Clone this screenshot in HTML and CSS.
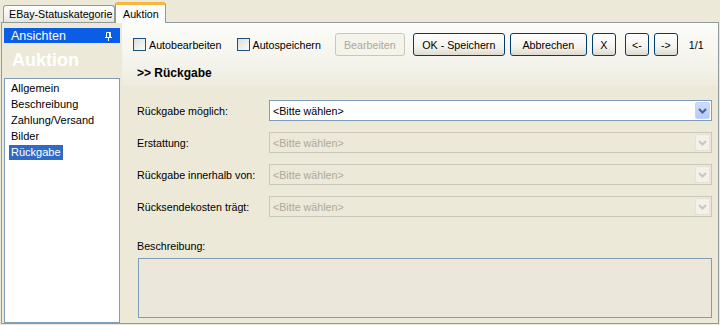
FILE: index.html
```html
<!DOCTYPE html>
<html lang="de">
<head>
  <meta charset="UTF-8" />
  <title>Auktion - Rückgabe</title>
  <link rel="stylesheet" href="styles.css">
</head>
<body>
  <!-- Tab strip -->
  <div class="tabs">
    <div class="tab">EBay-Statuskategorie</div>
    <div class="tab active">Auktion</div>
  </div>

  <div class="page">
    <!-- Left: views -->
    <aside class="sidebar">
      <div class="side-head">
        <span>Ansichten</span>
        <svg class="pin" width="7" height="9" viewBox="0 0 7 9">
          <path d="M0 5.5H7M1.5 0.5H5.5V5.5M1.5 0.5V5.5M4.5 0.5V5.5M3.5 5.5V9" stroke="#fff" fill="none" />
        </svg>
      </div>
      <div class="side-title">Auktion</div>
      <ul class="views">
        <li>Allgemein</li>
        <li>Beschreibung</li>
        <li>Zahlung/Versand</li>
        <li>Bilder</li>
        <li class="sel">Rückgabe</li>
      </ul>
    </aside>

    <!-- Right: editor -->
    <main class="content">
      <div class="top">
        <div class="toolbar">
          <label class="check"><span class="box"></span>Autobearbeiten</label>
          <label class="check second"><span class="box"></span>Autospeichern</label>
          <button class="btn edit" disabled>Bearbeiten</button>
          <button class="btn ok">OK - Speichern</button>
          <button class="btn cancel">Abbrechen</button>
          <button class="btn small close">X</button>
          <button class="btn small prev">&lt;-</button>
          <button class="btn small next">-&gt;</button>
          <span class="count">1/1</span>
        </div>
        <div class="section">&gt;&gt; Rückgabe</div>
      </div>

      <div class="form">
        <div class="row">
          <span class="label">Rückgabe möglich:</span>
          <div class="select">
            <span class="value">&lt;Bitte wählen&gt;</span>
            <span class="arrow"><svg width="9" height="6" viewBox="0 0 9 6"><path d="M1 1L4.5 4.5L8 1" stroke="#4d6185" stroke-width="2" fill="none"/></svg></span>
          </div>
        </div>
        <div class="row">
          <span class="label">Erstattung:</span>
          <div class="select off">
            <span class="value">&lt;Bitte wählen&gt;</span>
            <span class="arrow"><svg width="9" height="6" viewBox="0 0 9 6"><path d="M1 1L4.5 4.5L8 1" stroke="#c9c7ba" stroke-width="2" fill="none"/></svg></span>
          </div>
        </div>
        <div class="row">
          <span class="label">Rückgabe innerhalb von:</span>
          <div class="select off">
            <span class="value">&lt;Bitte wählen&gt;</span>
            <span class="arrow"><svg width="9" height="6" viewBox="0 0 9 6"><path d="M1 1L4.5 4.5L8 1" stroke="#c9c7ba" stroke-width="2" fill="none"/></svg></span>
          </div>
        </div>
        <div class="row">
          <span class="label">Rücksendekosten trägt:</span>
          <div class="select off">
            <span class="value">&lt;Bitte wählen&gt;</span>
            <span class="arrow"><svg width="9" height="6" viewBox="0 0 9 6"><path d="M1 1L4.5 4.5L8 1" stroke="#c9c7ba" stroke-width="2" fill="none"/></svg></span>
          </div>
        </div>

        <div class="desc-label">Beschreibung:</div>
        <div class="textarea"></div>
      </div>
    </main>
  </div>
</body>
</html>
```

FILE: styles.css
```css
/* Base */
body {
  margin: 0;
  width: 720px;
  height: 325px;
  overflow: hidden;
  background: #ece9d8;
  font-family: 'Liberation Sans', Arial, sans-serif;
  font-size: 10.7px;
  color: #000;
}
/* Tab strip */
.tabs {
  display: flex;
  align-items: flex-end;
  height: 22px;
  padding-left: 3px;
  box-sizing: border-box;
}
.tab {
  height: 17px;
  width: 112px;
  padding: 0 0 0 5px;
  line-height: 16px;
  white-space: nowrap;
  overflow: hidden;
  border: 1px solid #919b9c;
  border-bottom: none;
  border-radius: 3px 3px 0 0;
  background: linear-gradient(#ffffff, #f3f2ed 60%, #e6e4da);
  box-sizing: border-box;
}
.tab.active {
  height: 21px;
  width: 51px;
  padding: 0 0 0 7px;
  line-height: 19px;
  border-top: 3px solid #f5b53f;
  background: #fcfcfe;
  margin-bottom: -1px;
  position: relative;
  z-index: 1;
}
/* Page frame */
.page {
  display: flex;
  margin-left: 1px;
  width: 718px;
  height: 302px;
  border: 1px solid #919b9c;
  box-sizing: border-box;
  padding-left: 2px;
  background: #ece9d8;
}
/* Sidebar */
.sidebar {
  width: 116px;
  display: flex;
  flex-direction: column;
  padding-top: 5px;
}
.side-head {
  display: flex;
  align-items: center;
  justify-content: space-between;
  height: 15px;
  padding: 0 8px 0 7px;
  background: #0a5ee6;
  color: #fff;
  font-size: 12.5px;
}
.pin {
  margin-top: 1px;
}
.side-title {
  padding: 6px 0 0 8px;
  height: 29px;
  line-height: 22px;
  color: #fff;
  font-size: 18px;
  font-weight: bold;
}
.views {
  flex: 1;
  margin: 0;
  padding: 2px 0 0 4px;
  list-style: none;
  background: #fff;
  border: 1px solid #7f9db9;
}
.views li {
  width: fit-content;
  height: 15px;
  line-height: 15px;
  padding: 0 2px;
  margin-bottom: 1px;
  font-size: 11px;
}
.views li.sel {
  background: #316ac5;
  color: #fff;
}
/* Content */
.content {
  flex: 1;
  margin-left: 2px;
  display: flex;
  flex-direction: column;
}
.top {
  height: 63px;
  padding-top: 10px;
  box-sizing: border-box;
  background: linear-gradient(#fcfcf9, #f3f2ea 70%, #eeecdf);
}
.toolbar {
  display: flex;
  align-items: center;
  height: 23px;
  padding-left: 11px;
}
.check {
  display: flex;
  align-items: center;
  gap: 3px;
}
.check.second {
  margin-left: 15px;
}
.box {
  width: 13px;
  height: 13px;
  box-sizing: border-box;
  border: 1px solid #1c5180;
  background: linear-gradient(135deg, #dcdcd7, #fbfbf9);
}
.btn {
  height: 23px;
  box-sizing: border-box;
  border: 1px solid #003c74;
  border-radius: 3px;
  background: linear-gradient(#ffffff, #f4f3ee 60%, #dedbd0);
  font-family: inherit;
  font-size: 10.7px;
  color: #000;
  padding: 0;
}
.btn:disabled {
  border-color: #c9c7ba;
  background: #f5f4ea;
  color: #aca899;
}
.btn.edit { width: 70px; margin-left: 14px; }
.btn.ok { width: 92px; margin-left: 8px; }
.btn.cancel { width: 77px; margin-left: 5px; }
.btn.small { width: 24px; }
.btn.close { margin-left: 5px; }
.btn.prev { margin-left: 9px; }
.btn.next { margin-left: 5px; }
.count {
  margin-left: 11px;
}
.section {
  margin: 10px 0 0 15px;
  line-height: 14px;
  font-size: 12px;
  font-weight: bold;
}
/* Form rows */
.form {
  padding: 14px 6px 0 15px;
}
.row {
  display: flex;
  align-items: center;
  height: 21px;
  margin-bottom: 11px;
}
.label {
  width: 132px;
}
.select {
  flex: 1;
  display: flex;
  align-items: center;
  justify-content: space-between;
  height: 21px;
  box-sizing: border-box;
  border: 1px solid #7f9db9;
  background: #fff;
  padding: 0 1px 0 3px;
}
.arrow {
  display: flex;
  align-items: center;
  justify-content: center;
  width: 15px;
  height: 17px;
  border-radius: 2px;
  background: linear-gradient(#d0dcfc, #b5c9f8);
  border: 1px solid #c3d3fd;
  box-sizing: border-box;
}
.select.off {
  border-color: #c9c7ba;
  background: #ece9d8;
  color: #aca899;
}
.select.off .arrow {
  background: #f2f1ea;
  border-color: #e3e1d8;
}
.desc-label {
  margin-top: 23px;
  line-height: 13px;
}
.textarea {
  margin: 5px 0 0 1px;
  height: 60px;
  box-sizing: border-box;
  border: 1px solid #7f9db9;
  background: #ebe8db;
}
```
